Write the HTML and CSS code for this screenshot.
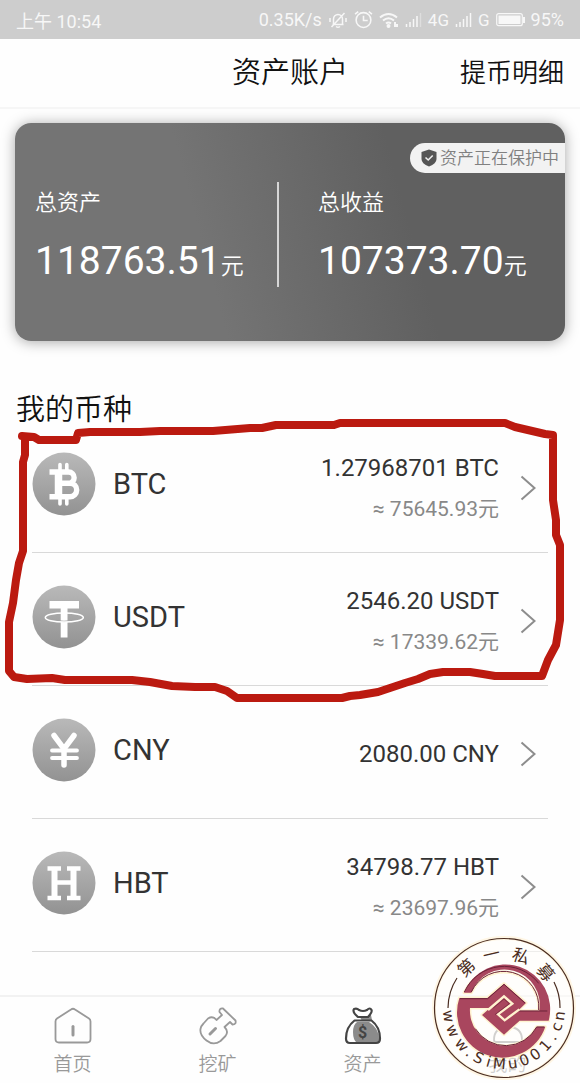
FILE: index.html
```html
<!DOCTYPE html>
<html lang="zh-CN">
<head>
<meta charset="utf-8">
<meta name="viewport" content="width=device-width, initial-scale=1">
<title>资产账户</title>
<link rel="stylesheet" href="styles.css">
</head>
<body>
<div class="page">
  <div class="status">
    <span>上午 10:54</span>
    <div class="status-right">
      <span>0.35K/s</span>
      <svg width="20" height="18" viewBox="0 0 19 18" class="line"><path d="M4 13.500h11M5 13V8a4.500 4.500 0 0 1 9 0v5M7.500 15.500q2 1.500 4 0M3 16 16 2M1.500 7v4M17.500 7v4"/></svg>
      <svg width="19" height="19" viewBox="0 0 18 18" class="line"><circle cx="9" cy="9.500" r="7"/><path d="M9 5.500V10h4M1 4l3-2.500M17 4l-3-2.500"/></svg>
      <svg width="20" height="18" viewBox="0 0 20 18" class="line wifi"><path d="M1 6.500q8.500-7 17 0M4 9.500q5.500-4.500 11 0M7 12.500q2.500-2 5 0M16 11v5M18 13v3"/><circle cx="9.500" cy="15" r="1"/></svg>
      <svg width="17" height="18" viewBox="0 0 17 18" class="line"><path d="M1.500 13v3M5 11v5M8.500 8v8M12 5v11"/><path d="M15.500 2v14" opacity=".4"/></svg>
      <span class="net">4G</span>
      <svg width="17" height="18" viewBox="0 0 17 18" class="line"><path d="M1.500 13v3M5 11v5M8.500 8v8M12 5v11M15.500 2v14"/></svg>
      <span class="net">G</span>
      <svg width="29" height="14" viewBox="0 0 29 14"><rect x=".7" y=".7" width="25.600" height="12" rx="2" fill="none" stroke="#f7f7f7" stroke-width="1.200"/><rect x="2.500" y="2.500" width="22" height="8.500" fill="#f7f7f7"/><path d="M27 4h2v6h-2z" fill="#f7f7f7"/></svg>
      <span>95%</span>
    </div>
  </div>

  <header class="header">
    <h1>资产账户</h1>
    <a href="#records">提币明细</a>
  </header>

  <main class="main">
    <section class="card">
      <div class="badge">
        <svg width="16" height="18" viewBox="0 0 16 18"><path d="M8 .5 15.500 3v7q0 4.500-7.500 7.500Q.5 14.500.5 10V3z" fill="#555"/><path d="m4.500 8.500 2.700 2.500 4.500-4.500" fill="none" stroke="#eee" stroke-width="1.600"/></svg>
        <span>资产正在保护中</span>
      </div>
      <div class="stat">
        <div class="stat-label">总资产</div>
        <div class="stat-value">118763.51<small>元</small></div>
      </div>
      <div class="stat">
        <div class="stat-label">总收益</div>
        <div class="stat-value">107373.70<small>元</small></div>
      </div>
    </section>

    <section class="assets">
      <h2>我的币种</h2>
      <ul class="coins">
        <li><a href="#btc" class="coin">
          <svg class="coin-icon" viewBox="0 0 64 64">
            <defs><linearGradient id="disc" x1="0" y1="0" x2="0" y2="1"><stop offset="0" stop-color="#b9b9b9"/><stop offset="1" stop-color="#929292"/></linearGradient></defs>
            <circle cx="32" cy="32" r="31.500" fill="url(#disc)"/>
            <g fill="none" stroke="#fff"><path stroke-width="5.400" d="M17.500 20H36.500a5.600 5.600 0 0 1 0 11.300H26M37 31.300h1a6.700 6.700 0 0 1 0 13.400H17.500"/><path stroke-width="7.500" d="M26.500 19v26"/><path stroke-width="3.600" stroke-linecap="round" d="M28 12.500v7M34.800 12.500v7M28 45v7M34.800 45v7"/></g>
          </svg>
          <span class="coin-name">BTC</span>
          <span class="coin-sum"><span class="amount">1.27968701 BTC</span><span class="approx">≈ 75645.93元</span></span>
          <svg class="chevron" viewBox="0 0 16 26"><path d="m1.500 1.500 13 11.500-13 11.500"/></svg>
        </a></li>
        <li><a href="#usdt" class="coin">
          <svg class="coin-icon" viewBox="0 0 64 64">
            <circle cx="32" cy="32" r="31.500" fill="url(#disc)"/>
            <path fill="#fff" d="M17.500 16H47v7.500H35.500V52.500h-6.800v-29H17.500z"/>
            <path d="M20 34.500q12 4 24 0" fill="none" stroke="#a3a3a3" stroke-width="1.600"/>
            <ellipse cx="32.300" cy="32.500" rx="19" ry="4.600" fill="none" stroke="#fff" stroke-width="1.500"/>
          </svg>
          <span class="coin-name">USDT</span>
          <span class="coin-sum"><span class="amount">2546.20 USDT</span><span class="approx">≈ 17339.62元</span></span>
          <svg class="chevron" viewBox="0 0 16 26"><path d="m1.500 1.500 13 11.500-13 11.500"/></svg>
        </a></li>
        <li><a href="#cny" class="coin">
          <svg class="coin-icon" viewBox="0 0 64 64">
            <circle cx="32" cy="32" r="31.500" fill="url(#disc)"/>
            <g fill="none" stroke="#fff" stroke-linecap="round"><path stroke-width="5.500" d="M22 17.500 32 31l10-13.500M32 31v16"/><path stroke-width="3.800" d="M20 32.500h25M20 40h25"/></g>
          </svg>
          <span class="coin-name">CNY</span>
          <span class="coin-sum"><span class="amount">2080.00 CNY</span></span>
          <svg class="chevron" viewBox="0 0 16 26"><path d="m1.500 1.500 13 11.500-13 11.500"/></svg>
        </a></li>
        <li><a href="#hbt" class="coin">
          <svg class="coin-icon" viewBox="0 0 64 64">
            <circle cx="32" cy="32" r="31.500" fill="url(#disc)"/>
            <g fill="none" stroke="#fff"><path stroke-width="6" d="M22.500 17v30M41.500 17v30"/><path stroke-width="4.600" d="M15.500 17.500H29M35 17.500h13.500M15.500 47H29M35 47h13.500M22.500 31.500h19"/></g>
          </svg>
          <span class="coin-name">HBT</span>
          <span class="coin-sum"><span class="amount">34798.77 HBT</span><span class="approx">≈ 23697.96元</span></span>
          <svg class="chevron" viewBox="0 0 16 26"><path d="m1.500 1.500 13 11.500-13 11.500"/></svg>
        </a></li>
      </ul>
      <svg class="marker" viewBox="0 390 580 320" aria-hidden="true"><path d="M22 436 34 437 39 440H76L78 433 90 432H140L160 431H213L250 428H262L276 425 334 425 340 423H505L515 427 545 434 553 435V500L556 520V535L560 545V620L556 645 548 660 542 676H495L483 674 470 672H443L430 674 418 679 405 683 390 688 378 692 360 695 350 696 342 698H237L227 691 215 687H195L172 686 150 682 132 680H65L52 678 27 679 14 677 9 671V622L13 603 16 580 19 563 23 551V462L25 455V437"/></svg>
    </section>
  </main>

  <nav class="tabs">
    <a href="#home" class="tab">
      <svg width="38" height="38" viewBox="0 0 38 38" class="tab-line"><path d="M17 2.500q2-1.500 4 0l14 9q1.500 1 1.500 3V32q0 3.500-3.500 3.500H5Q1.500 35.500 1.500 32V14.500q0-2 1.500-3z"/><path d="M19 19.500v8.500" stroke-width="3"/></svg>
      <span>首页</span>
    </a>
    <a href="#mining" class="tab">
      <svg width="38" height="38" viewBox="0 0 38 38" class="tab-line"><path d="M9 11.500q5-3 8.500 1.500L23 8l-2.500-3Q20 1 24 1.500L36.500 13.500q1 4-3 4L31 15l-5.500 5q4.500 4.500 1 9l-5 5q-7 5-14-.5Q.5 28 1.500 22q.5-3 3-5.500z"/><path d="m11 27 5.500-5.500" stroke-width="3"/></svg>
      <span>挖矿</span>
    </a>
    <a href="#assets" class="tab" aria-current="page">
      <svg width="38" height="38" viewBox="0 0 38 38"><path d="M11 15h14q10 6 10 17 0 4-4 4H13q-4-3-4-11 0-7 4-10M16 10l11-2 1 5-10 1z" fill="#8b8b8b"/><g fill="none" stroke="#444" stroke-width="2.200" stroke-linejoin="round"><path d="M10 2q3-1 5 1 4 2 8 0 3-3 4.500 0 1 2-3.500 7H14Q8 5 10 2z" fill="#fff"/><path d="M10.500 13.500h17Q36 20 36 31.500q0 4.500-4 4.500H6q-4 0-4-4.500Q2 20 10.500 13.500z"/></g><text x="18.500" y="30.500" text-anchor="middle" class="dollar">$</text></svg>
      <span>资产</span>
    </a>
    <a href="#me" class="tab">
      <svg width="38" height="38" viewBox="0 0 38 38" class="tab-line"><circle cx="19" cy="9.500" r="7"/><path d="M5 33q0-13 14-13t14 13q0 2-2 2H7q-2 0-2-2z"/></svg>
      <span>我的</span>
    </a>
  </nav>

  <svg class="seal" viewBox="-72 -72 144 144">
    <circle r="70" fill="#fffefa" fill-opacity=".55" stroke="#fff6e4" stroke-width="4"/>
    <circle r="69.500" fill="none" stroke="#4a2c20" stroke-width="1.200"/>
    <path d="M-56 0A56 56 0 0 1-47-30M56 0A56 56 0 0 0 50-26" fill="none" stroke="#4a2c20" stroke-width="1.200"/>
    <g transform="scale(.3333) translate(-236 -232)">
      <g fill="none" stroke="#fff3d0" stroke-width="9" stroke-linejoin="round">
        <path d="M116 186A134 134 0 0 1 370 240V270H283L236 312 170 253 194 232H134A106 106 0 0 0 334 288H360A134 134 0 0 1 102 202H186L236 159 302 217 278 240H340A106 106 0 0 0 138 186z"/>
      </g>
      <path fill="#a9465e" d="M116 186A134 134 0 0 1 370 270H283L236 312 170 253 194 232H134A106 106 0 0 0 334 288H360A134 134 0 0 1 102 202H186L236 159 302 217 278 240H342A106 106 0 0 0 138 186z"/>
      <path d="M117 184A131 131 0 0 1 340 158M104 204H187L236 161 299 217M138 184A106 106 0 0 1 340 238M280 241H366M357 289H334A106 106 0 0 1 150 294" fill="none" stroke="#692238" stroke-width="3"/>
      <path d="M188 238 236 197 261 219 218 251 238 269 282 236" fill="none" stroke="#fff3d0" stroke-width="7"/>
      <path d="M204 232 236 205 252 219 209 252" fill="none" stroke="#692238" stroke-width="2"/>
    </g>
    <text class="seal-name" x="-39.800 -19.500 6.900 31.500" y="-30.100 -45.800 -48.700 -38" rotate="-43 -13 18 50">第一私募</text>
    <text class="seal-url" x="-61.300 -58.200 -50 -39.500 -32 -18.800 -11.500 4.800 17.800 30.200 42.100 51.100 56.100 59.700" y="2.800 19.200 35.400 46.600 52.200 58 60.200 61 58.500 53.200 44.400 33.500 24.300 13.300" rotate="82 66 49 38 27 16 5 -9 -21 -34 -48 -59 -70 -82">www.SiMu001.cn</text>
  </svg>
</div>
</body>
</html>
```
FILE: styles.css
```css
* { box-sizing: border-box; }

body {
  margin: 0;
  background: #fefefe;
  color: #333;
  font-family: Roboto, "Noto Sans CJK SC", sans-serif;
}

a { color: inherit; text-decoration: none; }
h1, h2 { margin: 0; font-weight: 350; color: #111; }

.page {
  position: relative;
  display: flex;
  flex-direction: column;
  min-height: 100vh;
}

.status {
  display: flex;
  align-items: center;
  justify-content: space-between;
  height: 39px;
  padding: 0 16px;
  background: #cdcdcd;
  color: #f7f7f7;
  font-size: 18px;
}
.status-right { display: flex; align-items: center; gap: 6px; }
.net { font-size: 17px; }
.line { fill: none; stroke: #f7f7f7; stroke-width: 1.5; }
.wifi { stroke-width: 2; }

.header {
  display: grid;
  grid-template-columns: 1fr auto 1fr;
  align-items: center;
  height: 70px;
  padding: 0 16px;
  border-bottom: 2px solid #f6f6f6;
}
.header h1 { grid-column: 2; font-size: 29px; line-height: 42px; }
.header a { justify-self: end; font-size: 26px; line-height: 36px; font-weight: 350; color: #111; }

.main { flex: 1; }

.card {
  position: relative;
  display: grid;
  grid-template-columns: 264fr 286fr;
  margin: 14px 15px 0;
  padding: 59px 0 54px;
  border-radius: 16px;
  background: linear-gradient(75deg, #747474 35%, #606060 70%);
  box-shadow: 0 1px 14px rgba(0, 0, 0, .35);
  color: #fff;
}
.stat { height: 105px; padding: 7px 0 0 20px; }
.stat + .stat { padding-left: 39px; }
.stat:not(:last-child) { border-right: 2px solid #d6d6d6; }
.stat-label { font-size: 22px; line-height: 28px; font-weight: 350; }
.stat-value { margin-top: 20px; font-size: 39px; line-height: 48px; }
.stat-value small { font-size: 23px; font-weight: 350; }

.badge {
  position: absolute;
  top: 20px;
  right: 0;
  display: flex;
  align-items: center;
  gap: 3px;
  height: 30px;
  padding: 0 6px 0 11px;
  border-radius: 15px 0 0 15px;
  background: #f2f2f2;
  color: #808080;
  font-size: 17px;
  line-height: 28px;
  font-weight: 350;
}

.assets { position: relative; padding-top: 49px; }
.assets h2 { padding-left: 16px; font-size: 29px; line-height: 40px; }

.coins { margin: 0; padding: 0 32px; margin-top: -10px; list-style: none; }
.coin {
  display: flex;
  align-items: center;
  height: 133px;
  padding-top: 4px;
  border-bottom: 1px solid #d9d9d9;
}
.coin-icon { width: 64px; height: 64px; margin-bottom: 8px; }
.coin-name { flex: 1; margin: 0 0 8px 17px; font-size: 29px; }
.coin-sum { display: flex; flex-direction: column; align-items: flex-end; gap: 9px; }
.amount { font-size: 24px; line-height: 32px; }
.approx { font-size: 21px; line-height: 32px; color: #888; }
.chevron {
  width: 16px;
  height: 26px;
  margin: 0 12px 0 21px;
  fill: none;
  stroke: #8d8d8d;
  stroke-width: 2;
}

.marker {
  position: absolute;
  top: 49px;
  left: 0;
  width: 100%;
  fill: none;
  stroke: #bb1a10;
  stroke-width: 8;
  stroke-linejoin: round;
  stroke-linecap: round;
  pointer-events: none;
}

.tabs {
  display: grid;
  grid-template-columns: repeat(4, 1fr);
  height: 88px;
  border-top: 2px solid #f2f2f2;
}
.tab {
  display: flex;
  flex-direction: column;
  align-items: center;
  gap: 6px;
  padding-top: 10px;
  color: #999;
  font-size: 19px;
  font-weight: 350;
  line-height: 28px;
}
.tab-line { fill: none; stroke: #999; stroke-width: 1.8; stroke-linecap: round; stroke-linejoin: round; }
.dollar { font: 700 16px Roboto, sans-serif; fill: #444; }

.seal {
  position: absolute;
  right: 4px;
  bottom: 3px;
  width: 144px;
  height: 144px;
  pointer-events: none;
}
.seal-name { font: 400 17px "Noto Sans CJK SC", sans-serif; fill: #4a2c20; }
.seal-url { font: 400 15px "DejaVu Sans", sans-serif; fill: #4a2c20; }
```
